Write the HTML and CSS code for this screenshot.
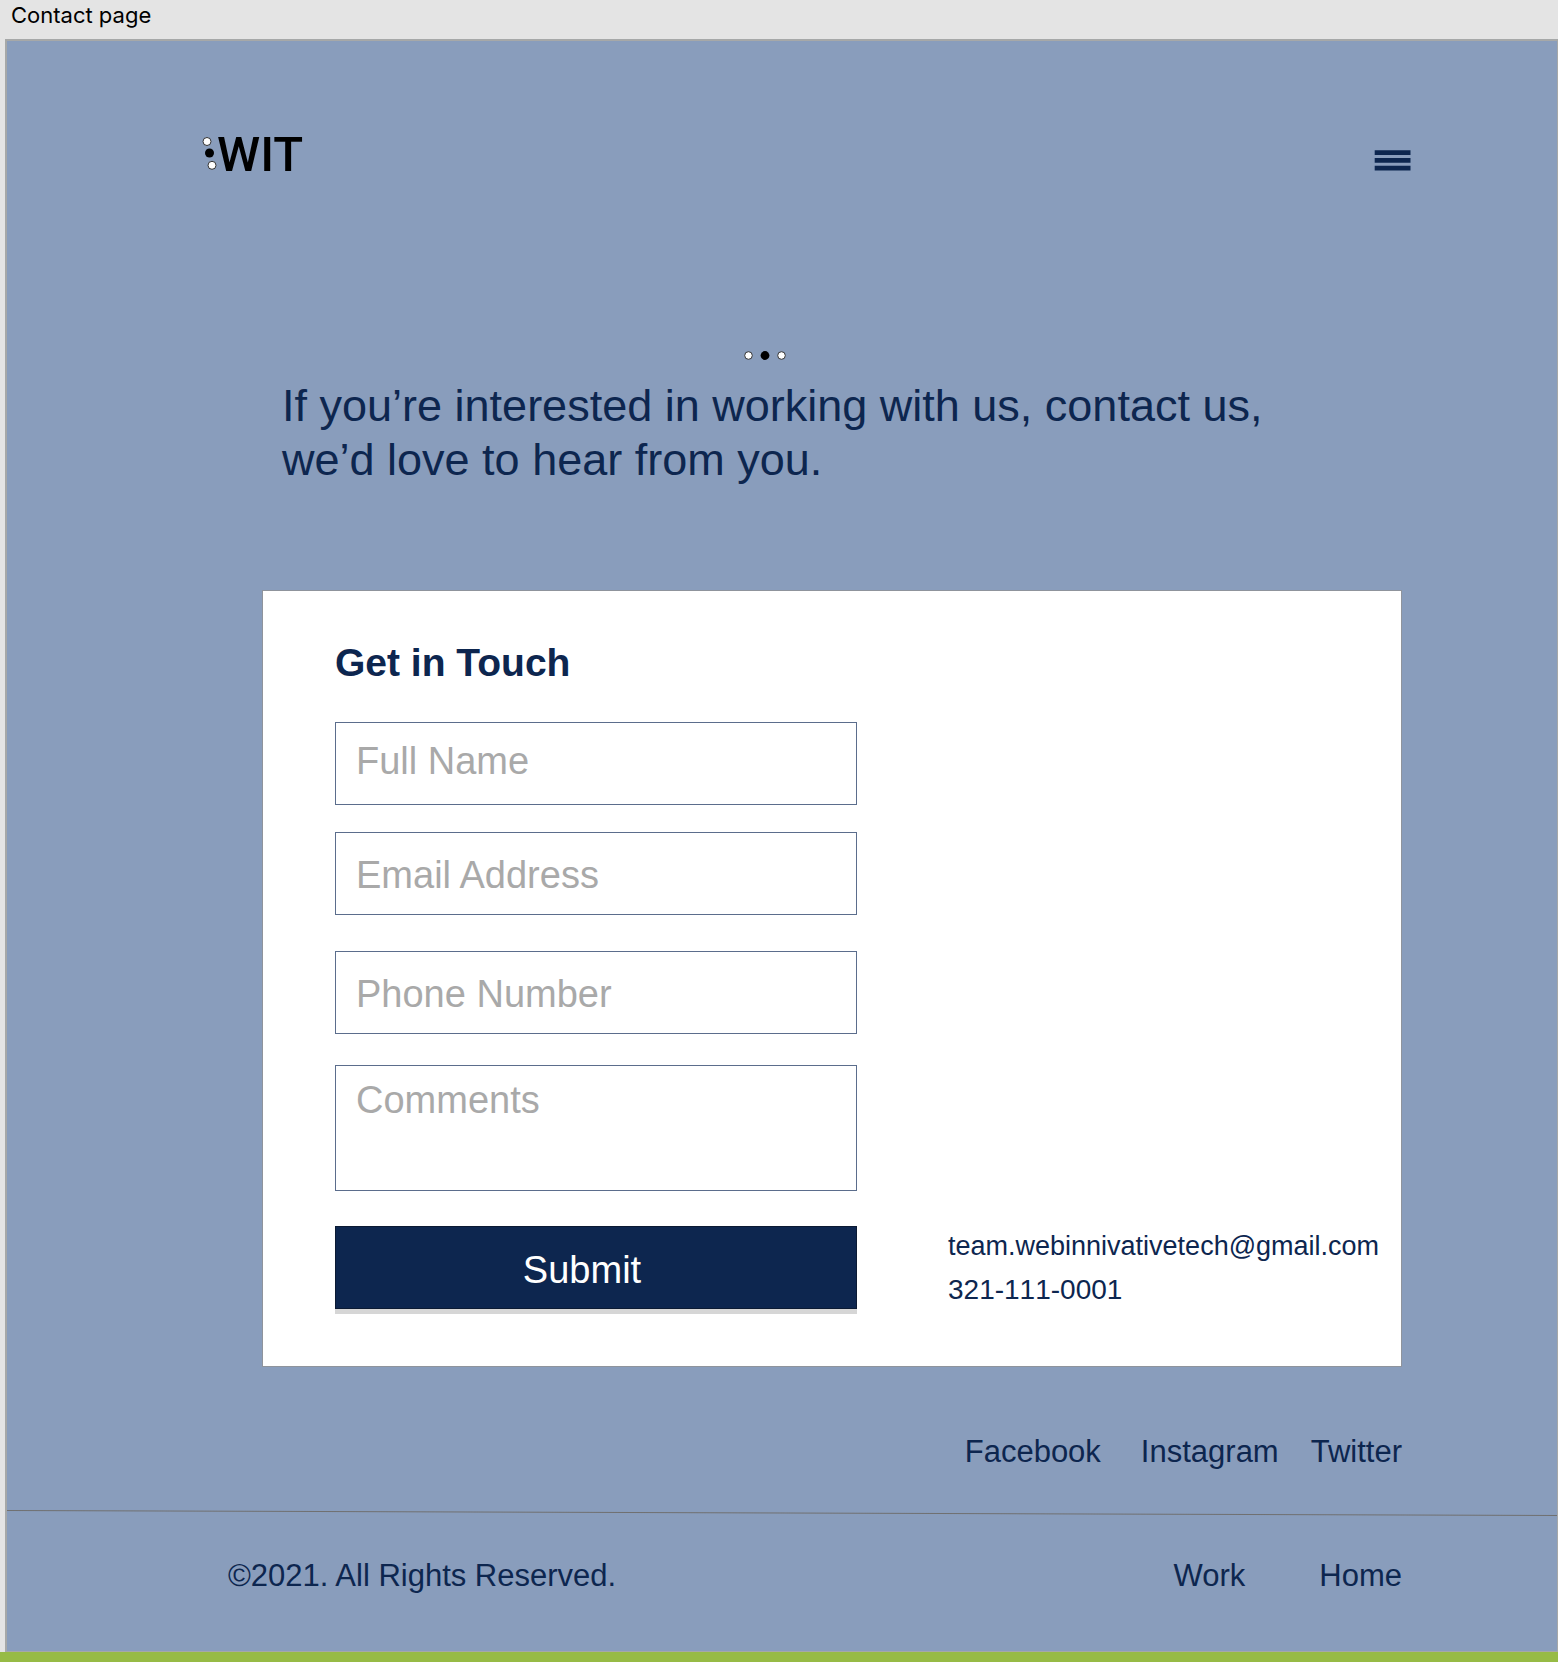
FILE: index.html
```html
<!DOCTYPE html>
<html lang="en">
<head>
  <meta charset="utf-8">
  <meta name="viewport" content="width=device-width, initial-scale=1">
  <title>Contact page</title>
  <link rel="stylesheet" href="styles.css">
</head>
<body>
  <div class="frame-label">Contact page</div>
  <div class="frame">
    <header class="header">
      <a class="logo" href="#">
        <svg class="logo-dots" width="15" height="36" viewBox="0 0 15 36" aria-hidden="true">
          <circle cx="5" cy="4.500" r="4" fill="#fff" stroke="#333" stroke-width="1"/>
          <circle cx="7.500" cy="16" r="4.500" fill="#000"/>
          <circle cx="10" cy="28.300" r="4" fill="#fff" stroke="#333" stroke-width="1"/>
        </svg>
        <span>WIT</span>
      </a>
      <button class="menu" type="button" aria-label="Menu">
        <svg width="37" height="21" viewBox="0 0 37 21" aria-hidden="true">
          <path d="M.7 .3H36.500V5H.7zM.7 8H36.500V12.700H.7zM.7 15.700H36.500V20.500H.7z" fill="#0d264f"/>
        </svg>
      </button>
    </header>

    <main>
      <section class="intro">
        <svg class="intro-dots" width="44" height="10" viewBox="0 0 44 10" aria-hidden="true">
          <circle cx="5.500" cy="5.500" r="3.800" fill="#fff" stroke="#333" stroke-width="1"/>
          <circle cx="22" cy="5.500" r="4.400" fill="#000"/>
          <circle cx="38.500" cy="5.500" r="3.800" fill="#fff" stroke="#333" stroke-width="1"/>
        </svg>
        <h1>If you’re interested in working with us, contact us, we’d love to hear from you.</h1>
      </section>

      <section class="card">
        <form class="form">
          <h2>Get in Touch</h2>
          <input class="field field-name" type="text" placeholder="Full Name" aria-label="Full Name">
          <input class="field field-email" type="email" placeholder="Email Address" aria-label="Email Address">
          <input class="field field-phone" type="tel" placeholder="Phone Number" aria-label="Phone Number">
          <textarea class="field field-comments" placeholder="Comments" aria-label="Comments"></textarea>
          <button class="submit" type="submit">Submit</button>
        </form>
        <address class="contact">
          <a href="mailto:team.webinnivativetech@gmail.com">team.webinnivativetech@gmail.com</a>
          <a class="phone" href="tel:321-111-0001">321-111-0001</a>
        </address>
      </section>

      <nav class="social" aria-label="Social">
        <a class="facebook" href="#">Facebook</a>
        <a href="#">Instagram</a>
        <a href="#">Twitter</a>
      </nav>
    </main>

    <svg class="divider" viewBox="0 0 1550 6" preserveAspectRatio="none" aria-hidden="true">
      <path d="M0 .5L1550 5.500" stroke="#707070" stroke-width="1"/>
    </svg>

    <footer class="footer">
      <p>©2021. All Rights Reserved.</p>
      <nav class="footer-nav" aria-label="Footer">
        <a href="#">Work</a>
        <a href="#">Home</a>
      </nav>
    </footer>
  </div>
  <div class="strip"></div>
</body>
</html>
```

FILE: styles.css
```css
:root {
  --navy: #0d264f;
  --blue: #899dbc;
}

* {
  box-sizing: border-box;
}

body {
  display: flex;
  flex-direction: column;
  min-height: 100vh;
  margin: 0;
  background: #e4e4e4;
  color: var(--navy);
  font-family: "Liberation Sans", Arial, sans-serif;
}

h1,
h2,
p {
  margin: 0;
}

a {
  color: inherit;
  text-decoration: none;
}

svg {
  display: block;
}

.frame-label {
  padding: 0 0 9px 11px;
  color: #000;
  font: 22px/30px Inter, sans-serif;
}

.frame {
  flex: 1;
  margin-left: 5px;
  border: 2px solid #a6a8a8;
  border-width: 2px 1px 1px 2px;
  background: var(--blue);
}

.header {
  display: flex;
  align-items: flex-end;
  justify-content: space-between;
  padding: 90px 138px 0 195px;
}

.logo {
  display: flex;
  align-items: center;
  color: #000;
  font: 500 49px/48px Roboto, sans-serif;
}

.menu {
  padding: 8px;
  border: 0;
  background: none;
}

.intro {
  padding: 171px 155px 0 275px;
}

.intro-dots {
  margin-left: 461px;
}

.intro h1 {
  max-width: 1000px;
  margin-top: 19px;
  font-size: 45px;
  font-weight: 400;
  line-height: 54px;
}

.card {
  display: grid;
  grid-template-columns: minmax(0, 522fr) minmax(0, 453fr);
  column-gap: 91px;
  margin: 103px 155px 0 255px;
  padding: 48px 0 55px 72px;
  border: 1px solid #8f949c;
  background: #fff;
}

.form {
  display: flex;
  flex-direction: column;
  padding-bottom: 2px;
}

.form h2 {
  margin-bottom: 35px;
  font-size: 39px;
  line-height: 48px;
}

.field {
  display: block;
  width: 100%;
  height: 83px;
  padding: 0 20px;
  border: 1px solid #5b6d8c;
  border-radius: 0;
  background: #fff;
  color: var(--navy);
  font: 38px/44px "Liberation Sans", Arial, sans-serif;
  resize: none;
}

.field::placeholder {
  color: #a9a9a9;
  opacity: 1;
}

.field-name {
  margin-bottom: 27px;
  padding-bottom: 4px;
}

.field-email {
  margin-bottom: 36px;
  padding-top: 4px;
}

.field-phone {
  margin-bottom: 31px;
  padding-top: 4px;
}

.field-comments {
  height: 126px;
  margin-bottom: 35px;
  padding-top: 12px;
}

.submit {
  height: 83px;
  padding: 4px 28px 0 0;
  border: 1px solid #0b1a33;
  background: var(--navy);
  box-shadow: 0 5px 0 #d6d6d6;
  color: #fff;
  font: 38px/44px "Liberation Sans", Arial, sans-serif;
}

.contact {
  display: flex;
  flex-direction: column;
  align-self: end;
  font-size: 27px;
  font-style: normal;
  line-height: 43px;
}

.phone {
  font-size: 28px;
  font-kerning: none;
}

.social,
.footer {
  font-size: 31px;
  line-height: 36px;
}

.social {
  display: flex;
  justify-content: flex-end;
  gap: 32px;
  padding: 67px 155px 40px;
}

.facebook {
  margin-right: 8px;
}

.divider {
  width: 100%;
  height: 6px;
}

.footer {
  display: flex;
  justify-content: space-between;
  padding: 42px 155px 56px 221px;
}

.footer-nav {
  display: flex;
  gap: 74px;
}

.strip {
  height: 10px;
  background: #97bb45;
}
```
